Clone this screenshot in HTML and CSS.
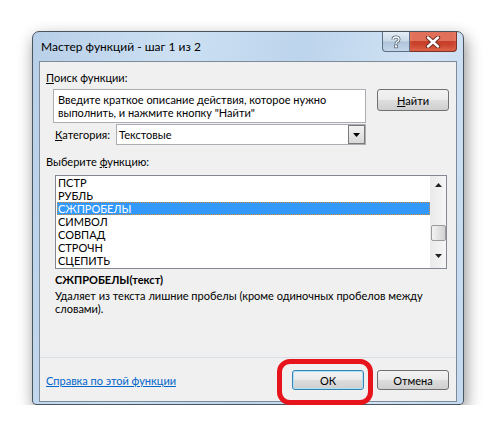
FILE: index.html
```html
<!DOCTYPE html>
<html lang="ru">
<head>
	<meta charset="UTF-8">
	<title>Мастер функций</title>
	<link rel="stylesheet" href="styles.css">
</head>
<body>
	<div class="window">
		<div class="titlebar">
			<span class="title">Мастер функций - шаг 1 из 2</span>
			<div class="caption-buttons">
				<div class="cap-btn help-btn">
					<svg width="12" height="14" viewBox="0 0 12 14">
						<path d="M3 4.5 Q3 2 6 2 Q9 2 9 4.5 Q9 6 7 7 Q6 7.6 6 9" fill="none" stroke="#5a6b7c" stroke-width="3"/>
						<path d="M3 4.5 Q3 2 6 2 Q9 2 9 4.5 Q9 6 7 7 Q6 7.6 6 9" fill="none" stroke="#fff" stroke-width="1.3"/>
						<rect x="4.6" y="10" width="2.8" height="2.8" fill="#fff" stroke="#5a6b7c" stroke-width="0.8"/>
					</svg>
				</div>
				<div class="cap-btn close-btn">
					<svg width="16" height="12" viewBox="0 0 16 12">
						<path d="M3 1.5 L13 10.5 M13 1.5 L3 10.5" stroke="#6e2a20" stroke-width="4.4" stroke-linecap="round"/>
						<path d="M3 1.5 L13 10.5 M13 1.5 L3 10.5" stroke="#fff" stroke-width="2.4" stroke-linecap="round"/>
					</svg>
				</div>
			</div>
		</div>
		<div class="content">
			<div class="label search-label"><u>П</u>оиск функции:</div>
			<div class="search-row">
				<div class="search-box">Введите краткое описание действия, которое нужно выполнить, и нажмите кнопку "Найти"</div>
				<div class="btn find-btn"><u>Н</u>айти</div>
			</div>
			<div class="category-row">
				<span class="label"><u>К</u>атегория:</span>
				<div class="select">
					<span class="select-value">Текстовые</span>
					<div class="select-arrow">
						<svg width="7" height="4" viewBox="0 0 7 4"><path d="M0 0 H7 L3.5 4 Z" fill="#000"/></svg>
					</div>
				</div>
			</div>
			<div class="label pick-label">Выберите <u>ф</u>ункцию:</div>
			<div class="listbox">
				<ul class="items">
					<li>ПСТР</li>
					<li>РУБЛЬ</li>
					<li class="selected">СЖПРОБЕЛЫ</li>
					<li>СИМВОЛ</li>
					<li>СОВПАД</li>
					<li>СТРОЧН</li>
					<li>СЦЕПИТЬ</li>
				</ul>
				<div class="scrollbar">
					<svg class="arrow-up" width="7" height="4" viewBox="0 0 7 4"><path d="M0 4 H7 L3.5 0 Z" fill="#222"/></svg>
					<div class="thumb"></div>
					<svg class="arrow-down" width="7" height="4" viewBox="0 0 7 4"><path d="M0 0 H7 L3.5 4 Z" fill="#222"/></svg>
				</div>
			</div>
			<div class="signature">СЖПРОБЕЛЫ(текст)</div>
			<div class="description">Удаляет из текста лишние пробелы (кроме одиночных пробелов между словами).</div>
			<div class="footer">
				<a class="help-link" href="#">Справка по этой функции</a>
				<div class="footer-buttons">
					<div class="btn ok-btn">ОК<div class="highlight"></div></div>
					<div class="btn">Отмена</div>
				</div>
			</div>
		</div>
	</div>
</body>
</html>
```

FILE: styles.css
```css
body {
	margin: 0;
	background: #fff;
	font-family: Lato, "Liberation Sans", sans-serif;
	font-size: 11px;
	color: #000;
}
.window {
	box-sizing: border-box;
	margin: 31px 0 0 32px;
	width: 432px;
	height: 374px;
	border: 1px solid #4a5560;
	border-radius: 7px 7px 4px 4px;
	padding: 0 6px 2px 6px;
	display: flex;
	flex-direction: column;
	background: linear-gradient(100deg, #b7cfe8 0%, #cde0f3 30%, #bcd4ec 55%, #d2e3f4 80%, #c3d9ef 100%);
	box-shadow: 2px 6px 16px rgba(0, 0, 0, 0.45);
}
.titlebar {
	height: 29px;
	flex: none;
	display: flex;
	justify-content: space-between;
	align-items: flex-start;
}
.title {
	margin: 7px 0 0 2px;
	font-size: 12px;
	line-height: 15px;
}
.caption-buttons {
	display: flex;
}
.cap-btn {
	height: 20px;
	box-sizing: border-box;
	border: 1px solid #5d6f84;
	border-top: none;
	display: flex;
	align-items: center;
	justify-content: center;
}
.help-btn {
	width: 28px;
	border-radius: 0 0 0 4px;
	background: linear-gradient(#e4edf6 0%, #c9d8e8 48%, #afc3d8 52%, #c4d6e8 100%);
}
.close-btn {
	width: 47px;
	border-color: #7a3326;
	border-left: none;
	border-radius: 0 0 4px 0;
	background: #c8402a;
	box-shadow: inset 0 9px 0 rgba(255, 170, 150, 0.45), inset 0 -4px 4px rgba(240, 130, 100, 0.5);
}
.content {
	flex: 1;
	background: #f0f0f0;
	border: 1px solid #7d8a99;
	display: flex;
	flex-direction: column;
}
.label {
	line-height: 15px;
}
.search-label {
	margin: 8px 0 0 6px;
}
.search-row {
	display: flex;
	margin: 4px 0 0 13px;
}
.search-box {
	box-sizing: border-box;
	width: 313px;
	height: 34px;
	border: 1px solid #abadb3;
	background: #fff;
	padding: 3px 4px 0 4px;
	line-height: 13px;
}
.btn {
	position: relative;
	width: 72px;
	height: 20px;
	box-sizing: border-box;
	border: 1px solid #707070;
	border-radius: 3px;
	background: linear-gradient(#f2f2f2 0%, #ebebeb 48%, #dddddd 52%, #cfcfcf 100%);
	display: flex;
	align-items: center;
	justify-content: center;
}
.find-btn {
	margin-left: 11px;
	height: 22px;
}
.category-row {
	display: flex;
	align-items: center;
	margin: 1px 0 0 15px;
}
.category-row .label {
	width: 61px;
}
.select {
	width: 250px;
	height: 21px;
	box-sizing: border-box;
	border: 1px solid #abadb3;
	background: #fff;
	display: flex;
	justify-content: space-between;
	align-items: stretch;
}
.select-value {
	padding-left: 2px;
	line-height: 19px;
}
.select-arrow {
	width: 15px;
	border: 1px solid #7a7a7a;
	background: linear-gradient(#f2f2f2, #d8d8d8);
	display: flex;
	align-items: center;
	justify-content: center;
}
.pick-label {
	margin: 9px 0 0 6px;
}
.listbox {
	margin: 6px 0 0 15px;
	width: 392px;
	height: 94px;
	box-sizing: border-box;
	border: 1px solid #828790;
	background: #fff;
	display: flex;
}
.items {
	flex: 1;
	list-style: none;
	margin: 0;
	padding: 0 0 0 1px;
}
.items li {
	height: 13px;
	line-height: 13px;
	padding-left: 1px;
	box-sizing: border-box;
}
.items .selected {
	background: #3399ff;
	color: #fff;
	outline: 1px dotted #d58a3a;
	outline-offset: -1px;
}
.scrollbar {
	width: 16px;
	background: linear-gradient(to right, #eaeaea, #f5f5f5);
	display: flex;
	flex-direction: column;
	align-items: center;
}
.arrow-up {
	margin-top: 7px;
}
.thumb {
	width: 15px;
	height: 16px;
	box-sizing: border-box;
	margin-top: 38px;
	border: 1px solid #9a9a9a;
	border-radius: 2px;
	background: linear-gradient(to right, #f3f3f3, #e2e2e2 50%, #d2d2d2);
}
.arrow-down {
	margin-top: 13px;
}
.signature {
	margin: 3px 0 0 15px;
	font-weight: bold;
	line-height: 15px;
}
.description {
	margin: 2px 0 0 15px;
	width: 375px;
	line-height: 13px;
}
.footer {
	margin-top: auto;
	border-top: 1px solid #d5dfe5;
	padding: 12px 7px 11px 6px;
	display: flex;
	justify-content: space-between;
	align-items: center;
}
.help-link {
	color: #0066cc;
	line-height: 15px;
}
.footer-buttons {
	display: flex;
	gap: 13px;
}
.ok-btn {
	border-color: #3c7fb1;
	box-shadow: inset 0 0 0 1px #a8e4fb;
}
.highlight {
	position: absolute;
	left: -16px;
	top: -12px;
	width: 96px;
	height: 46px;
	box-sizing: border-box;
	border: 5px solid #e8141b;
	border-radius: 13px;
}
```
